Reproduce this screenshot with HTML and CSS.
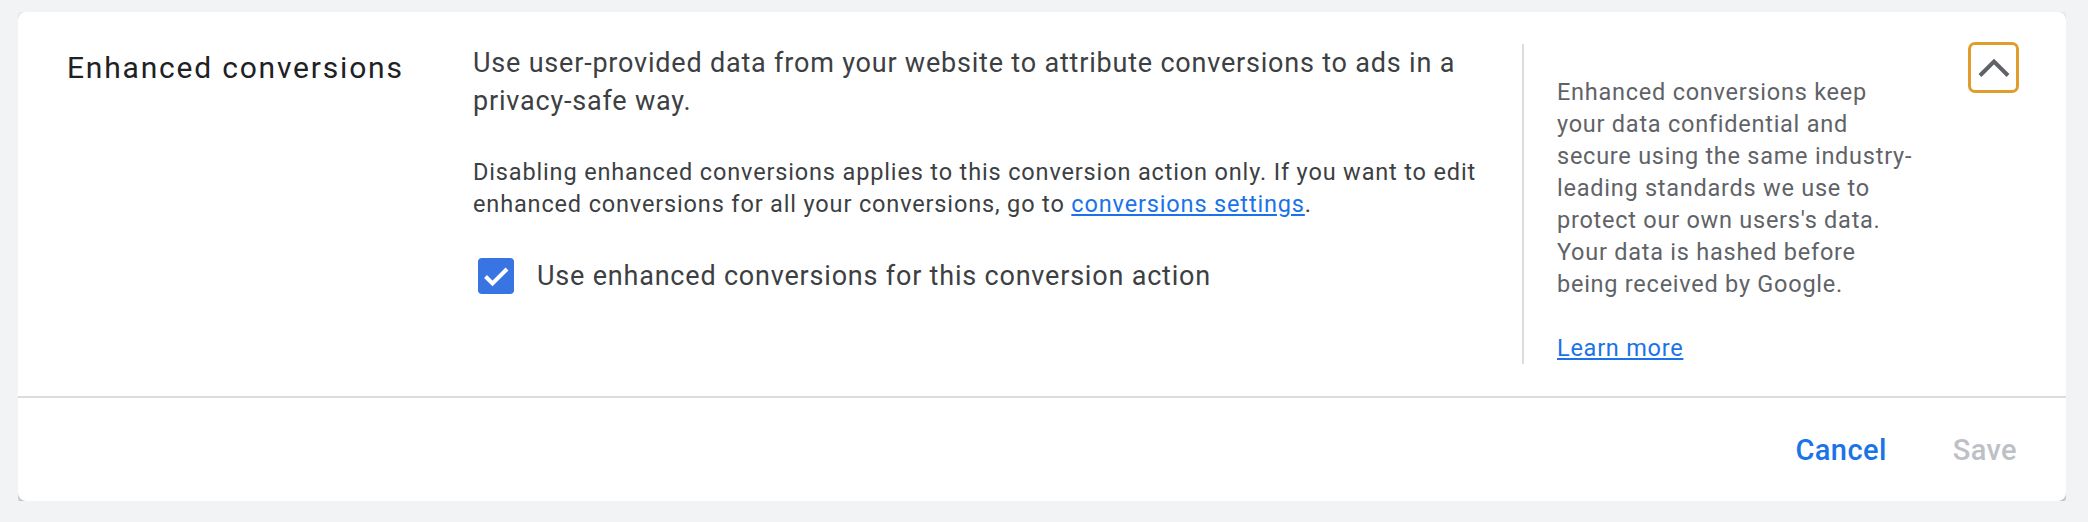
FILE: index.html
```html
<!DOCTYPE html>
<html lang="en">
<head>
    <meta charset="UTF-8">
    <title>Enhanced conversions</title>
    <link rel="stylesheet" href="styles.css">
</head>
<body>
    <div class="card">
        <div class="section">
            <div class="title">Enhanced conversions</div>

            <div class="main">
                <p class="lead">Use user-provided data from your website to attribute conversions to ads in a privacy-safe way.</p>
                <p class="note">Disabling enhanced conversions applies to this conversion action only. If you want to edit enhanced conversions for all your conversions, go to <a href="#">conversions settings</a>.</p>
                <label class="check-row">
                    <span class="checkbox">
                        <svg width="36" height="36" viewBox="0 0 36 36">
                            <polyline points="7.5,18.5 14.5,25.5 29,11" fill="none" stroke="#fff" stroke-width="4"/>
                        </svg>
                    </span>
                    <span>Use enhanced conversions for this conversion action</span>
                </label>
            </div>

            <div class="side">
                <p>Enhanced conversions keep your data confidential and secure using the same industry-leading standards we use to protect our own users's data. Your data is hashed before being received by Google.</p>
                <a href="#">Learn more</a>
            </div>

            <button class="collapse" aria-label="Collapse">
                <svg width="34" height="20" viewBox="0 0 34 20">
                    <polyline points="3,17.5 17,3.5 31,17.5" fill="none" stroke="#5f6368" stroke-width="4"/>
                </svg>
            </button>
        </div>

        <div class="footer">
            <button class="btn btn-cancel">Cancel</button>
            <button class="btn btn-save" disabled>Save</button>
        </div>
    </div>
</body>
</html>
```

FILE: styles.css
```css
body {
    margin: 12px 22px 20px 18px;
    background-color: #f1f3f4;
    font-family: Roboto, "Liberation Sans", Arial, sans-serif;
    color: #3c4043;
}
.card {
    background: white;
    border-radius: 8px;
    box-shadow: 0 2px 3px rgba(60,64,67,0.3), 0 2px 6px 2px rgba(60,64,67,0.12);
}
.section {
    display: flex;
    align-items: flex-start;
    padding: 32px 47px 32px 49px;
}
.title {
    width: 406px;
    flex: none;
    margin-top: 6px;
    font-size: 30px;
    line-height: 36px;
    color: #202124;
    letter-spacing: 1.8px;
}
.main {
    width: 1017px;
    flex: none;
    margin-right: 32px;
}
.main p {
    margin: 0;
}
.lead {
    font-size: 27px;
    line-height: 38.4px;
    letter-spacing: 0.8px;
}
.note {
    margin-top: 35px !important;
    font-size: 23.5px;
    line-height: 32px;
    letter-spacing: 0.85px;
}
a {
    color: #1a73e8;
}
.check-row {
    display: flex;
    align-items: center;
    gap: 23px;
    margin-top: 37px;
    padding-left: 5px;
    font-size: 27px;
    line-height: 38.4px;
    letter-spacing: 0.8px;
}
.checkbox {
    width: 36px;
    height: 36px;
    border-radius: 4px;
    background: #3874e2;
    display: flex;
}
.side {
    width: 360px;
    flex: none;
    border-left: 2px solid #dadce0;
    padding: 32px 0 0 33px;
    font-size: 23.5px;
    line-height: 32px;
    letter-spacing: 0.75px;
    color: #5f6368;
}
.side p {
    margin: 0 0 32px;
}
.collapse {
    margin: -2px 0 0 auto;
    width: 51px;
    height: 51px;
    padding: 0;
    border: 3px solid #e09d2e;
    border-radius: 7px;
    background: white;
    display: flex;
    align-items: center;
    justify-content: center;
}
.footer {
    display: flex;
    justify-content: flex-end;
    align-items: center;
    gap: 66px;
    height: 103px;
    padding-right: 49px;
    border-top: 2px solid #dadce0;
}
.btn {
    border: none;
    background: none;
    padding: 0;
    font-family: Roboto, "Liberation Sans", Arial, sans-serif;
    font-size: 29px;
    font-weight: 500;
    letter-spacing: 0.4px;
}
.btn-cancel {
    color: #1a73e8;
}
.btn-save {
    color: #bdc1c6;
}
```
